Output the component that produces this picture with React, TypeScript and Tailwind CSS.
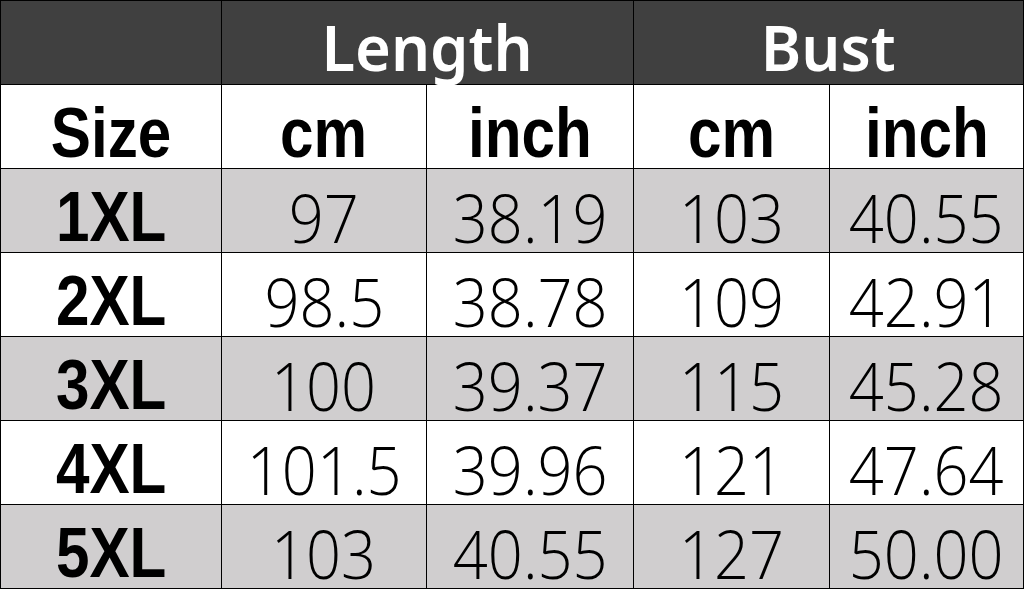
const rows = [
  ["1XL", "97", "38.19", "103", "40.55"],
  ["2XL", "98.5", "38.78", "109", "42.91"],
  ["3XL", "100", "39.37", "115", "45.28"],
  ["4XL", "101.5", "39.96", "121", "47.64"],
  ["5XL", "103", "40.55", "127", "50.00"],
];

const bold = "font-['Liberation_Sans',Arial,sans-serif] font-bold text-[70px] leading-[60px] scale-x-[0.86]";
const light = "font-['Open_Sans',sans-serif] font-light text-[66px] leading-[60px] scale-x-[0.93]";

export default function App() {
  return (
    <div className="w-[1024px] h-[589px] bg-black p-px">
      <div className="grid grid-cols-[220px_204px_206px_195px_193px] grid-rows-[repeat(7,83px)] gap-px">
        <div className="bg-[#404040]" />
        <div className="col-span-2 bg-[#404040] flex items-center justify-center pt-2">
          <span className="font-['Noto_Sans',sans-serif] font-semibold text-[64px] leading-[60px] text-white scale-x-[0.96]">
            Length
          </span>
        </div>
        <div className="col-span-2 bg-[#404040] flex items-center justify-center pt-2">
          <span className="font-['Noto_Sans',sans-serif] font-semibold text-[64px] leading-[60px] text-white scale-x-[0.96]">
            Bust
          </span>
        </div>

        {["Size", "cm", "inch", "cm", "inch"].map((h, i) => (
          <div key={i} className="bg-white flex items-center justify-center pt-3">
            <span className={bold + " text-black"}>{h}</span>
          </div>
        ))}

        {rows.map((r, ri) =>
          r.map((c, ci) => (
            <div
              key={ri + "-" + ci}
              className={
                (ri % 2 === 0 ? "bg-[#d0cecf]" : "bg-white") +
                " flex items-center justify-center pt-3"
              }
            >
              <span className={(ci === 0 ? bold : light) + " text-black"}>{c}</span>
            </div>
          ))
        )}
      </div>
    </div>
  );
}
